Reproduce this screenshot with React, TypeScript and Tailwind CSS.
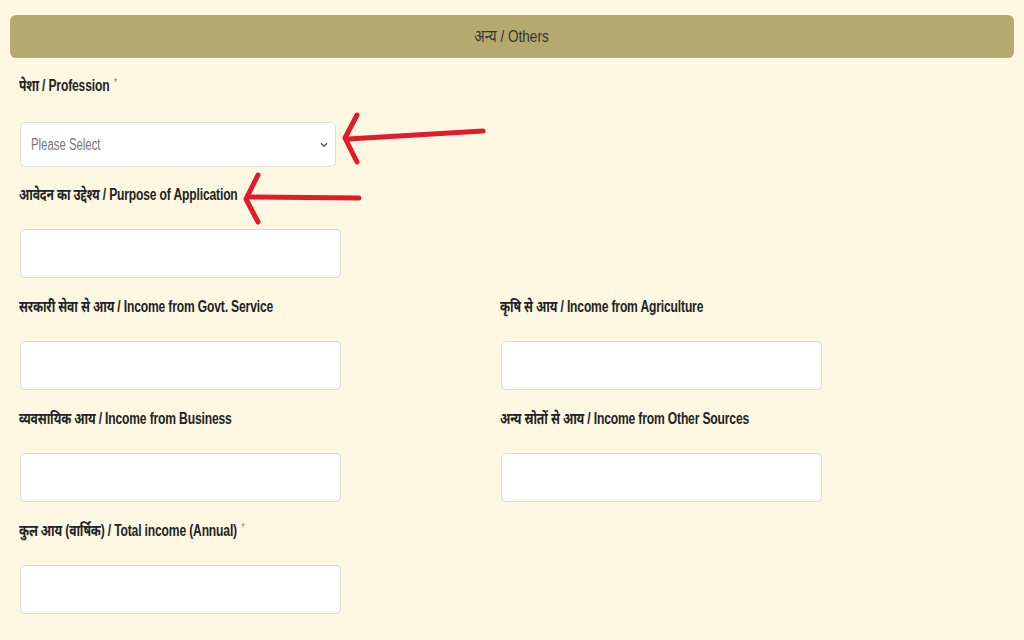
import React from "react";

const font = {
  fontFamily: "'Liberation Sans', 'Noto Sans', sans-serif",
};

function Label({ text, required }: { text: string; required?: boolean }) {
  return (
    <div className="h-[22px] text-[16px] font-bold text-[#222] tracking-[-0.2px] leading-[22px]">
      <span className="inline-block whitespace-nowrap origin-left scale-x-[0.755]">
        {text}
        {required && <sup className="ml-[6px] text-[11px] text-[#e05a5a] font-normal">*</sup>}
      </span>
    </div>
  );
}

function Input() {
  return <div className="ml-px h-[49px] w-[321px] bg-white border border-[#dcdcdc] rounded-[5px]" />;
}

function Field({ label, required }: { label: string; required?: boolean }) {
  return (
    <div className="flex flex-col gap-[23px]">
      <Label text={label} required={required} />
      <Input />
    </div>
  );
}

export default function App() {
  return (
    <div className="relative w-[1024px] h-[640px] bg-[#fef8e2] overflow-hidden" style={font}>
      <div className="px-[10px] pt-[15px]">
        <div className="h-[43px] rounded-[6px] bg-[#b5a970] flex items-center justify-center text-[17px] text-[#333]">
          <span className="inline-block whitespace-nowrap scale-x-[0.8]">अन्य / Others</span>
        </div>

        <div className="pl-[9px] pt-[17px]">
          <Label text="पेशा / Profession" required />
          <div className="mt-[25px] ml-px w-[316px] h-[45px] bg-white border border-[#dcdcdc] rounded-[5px] flex items-center justify-between pl-[10px] pr-[7px]">
            <span className="inline-block whitespace-nowrap origin-left scale-x-[0.71] text-[16px] text-[#777]">
              Please Select
            </span>
            <svg width="8" height="6" viewBox="0 0 8 6" fill="none">
              <path d="M1 1.2l3 3 3-3" stroke="#555" strokeWidth="1.4" />
            </svg>
          </div>

          <div className="mt-[17px] flex flex-col gap-[23px]">
            <Label text="आवेदन का उद्देश्य / Purpose of Application" />
            <Input />
          </div>

          <div className="mt-[18px] grid grid-cols-[481px_481px] gap-y-[18px]">
            <Field label="सरकारी सेवा से आय / Income from Govt. Service" />
            <Field label="कृषि से आय / Income from Agriculture" />
            <Field label="व्यवसायिक आय / Income from Business" />
            <Field label="अन्य स्रोतों से आय / Income from Other Sources" />
            <Field label="कुल आय (वार्षिक) / Total income (Annual)" required />
          </div>
        </div>
      </div>

      <svg className="absolute inset-0 pointer-events-none" width="1024" height="640" viewBox="0 0 1024 640" fill="none">
        <g stroke="#e11b2c" strokeWidth="5" strokeLinecap="round" strokeLinejoin="round">
          <path d="M483 131 L348 139" />
          <path d="M357 115 L345 138 L357 162" />
          <path d="M359 198 L249 197" />
          <path d="M258 175 L246 199 L258 222" />
        </g>
      </svg>
    </div>
  );
}
